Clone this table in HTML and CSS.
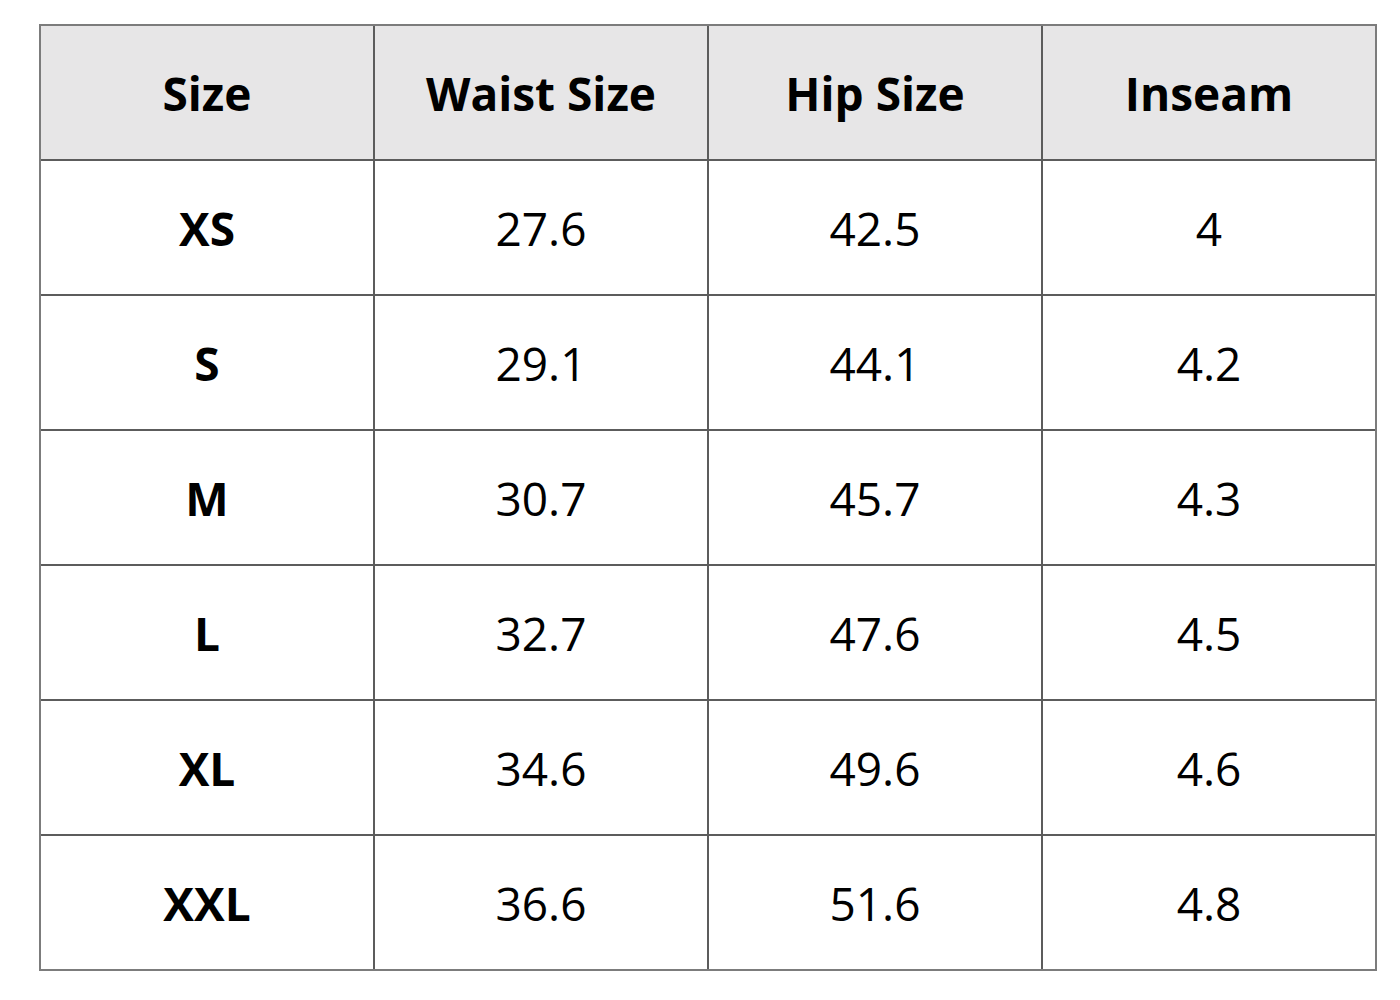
FILE: index.html
```html
<!DOCTYPE html>
<html>
<head>
<meta charset="utf-8">
<link rel="stylesheet" href="styles.css">
</head>
<body>
<div class="chart">
  <div class="cell head">Size</div><div class="cell head">Waist Size</div><div class="cell head">Hip Size</div><div class="cell head">Inseam</div>
  <div class="cell key">XS</div><div class="cell">27.6</div><div class="cell">42.5</div><div class="cell">4</div>
  <div class="cell key">S</div><div class="cell">29.1</div><div class="cell">44.1</div><div class="cell">4.2</div>
  <div class="cell key">M</div><div class="cell">30.7</div><div class="cell">45.7</div><div class="cell">4.3</div>
  <div class="cell key">L</div><div class="cell">32.7</div><div class="cell">47.6</div><div class="cell">4.5</div>
  <div class="cell key">XL</div><div class="cell">34.6</div><div class="cell">49.6</div><div class="cell">4.6</div>
  <div class="cell key">XXL</div><div class="cell">36.6</div><div class="cell">51.6</div><div class="cell">4.8</div>
</div>
</body>
</html>
```

FILE: styles.css
```css
html, body {
  margin: 0;
  padding: 0;
  background: #ffffff;
}
body {
  padding: 24px 0 0 39px;
  font-family: "Open Sans", "Noto Sans", sans-serif;
  color: #000;
}
.chart {
  width: 1338px;
  box-sizing: border-box;
  display: grid;
  grid-template-columns: repeat(4, 1fr);
  grid-auto-rows: 133px;
  gap: 2px;
  background: #5c5c5c;
  border: 2px solid #7c7c7c;
}
.cell {
  background: #ffffff;
  display: flex;
  align-items: center;
  justify-content: center;
  font-size: 46px;
  font-weight: 400;
  line-height: 1;
}
.head {
  background: #e7e6e7;
  font-weight: 700;
}
.key {
  font-weight: 700;
}
```
